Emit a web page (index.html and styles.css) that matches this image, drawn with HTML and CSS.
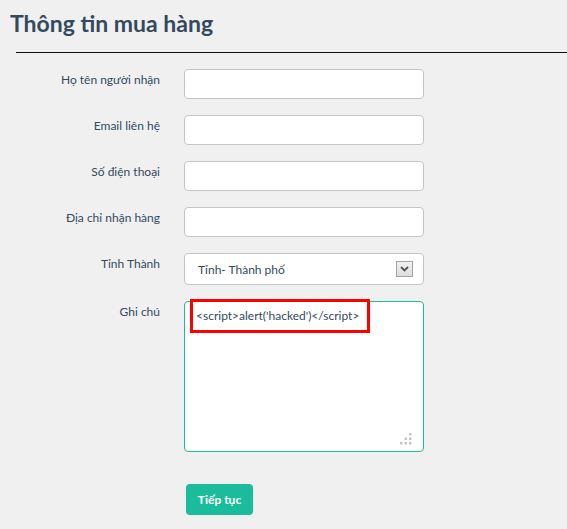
FILE: index.html
```html
<!DOCTYPE html>
<html lang="vi">
<head>
<meta charset="utf-8">
<title>Thông tin mua hàng</title>
<link rel="stylesheet" href="styles.css">
</head>
<body>
<div class="page">
  <h1 class="title">Thông tin mua hàng</h1>
  <hr class="rule">
  <form class="form">
    <div class="row">
      <label class="label">Họ tên người nhận</label>
      <input class="field" type="text">
    </div>
    <div class="row">
      <label class="label">Email liên hệ</label>
      <input class="field" type="text">
    </div>
    <div class="row">
      <label class="label">Số điện thoại</label>
      <input class="field" type="text">
    </div>
    <div class="row">
      <label class="label">Địa chỉ nhận hàng</label>
      <input class="field" type="text">
    </div>
    <div class="row">
      <label class="label">Tỉnh Thành</label>
      <div class="select-wrap">
        <select class="select"><option>Tỉnh- Thành phố</option></select>
        <span class="arrow">
          <svg width="9" height="6" viewBox="0 0 9 6"><path d="M1 1 L4.5 4.5 L8 1" fill="none" stroke="#555" stroke-width="1.8"/></svg>
        </span>
      </div>
    </div>
    <div class="row">
      <label class="label">Ghi chú</label>
      <div class="area-wrap">
        <textarea class="area">&lt;script&gt;alert('hacked')&lt;/script&gt;</textarea>
        <span class="highlight"></span>
        <svg class="grip" width="13" height="12" viewBox="0 0 13 12">
          <rect x="9" y="0" width="2.5" height="2.5" fill="#c4c4c4"/>
          <rect x="4.5" y="4.5" width="2.5" height="2.5" fill="#c4c4c4"/>
          <rect x="9" y="4.5" width="2.5" height="2.5" fill="#c4c4c4"/>
          <rect x="0" y="9" width="2.5" height="2.5" fill="#c4c4c4"/>
          <rect x="4.5" y="9" width="2.5" height="2.5" fill="#c4c4c4"/>
          <rect x="9" y="9" width="2.5" height="2.5" fill="#c4c4c4"/>
        </svg>
      </div>
    </div>
    <div class="actions">
      <button class="btn" type="button">Tiếp tục</button>
    </div>
  </form>
</div>
</body>
</html>
```
FILE: styles.css
```css
html, body {
  margin: 0;
  padding: 0;
  background: #f0f0f0;
}
body {
  font-family: Lato, "Open Sans", sans-serif;
  color: #34495e;
}
.page {
  width: 567px;
  height: 529px;
  overflow: hidden;
}
.title {
  margin: 9px 0 0 10px;
  font-size: 23px;
  line-height: 28px;
  font-weight: 700;
  color: #34495e;
}
.rule {
  margin: 15px 0 0 16px;
  border: 0;
  border-top: 1px solid #111;
  height: 0;
}
.form {
  display: flex;
  flex-direction: column;
  gap: 16px;
  padding-top: 16px;
}
.row {
  display: grid;
  grid-template-columns: 160px 240px;
  column-gap: 24px;
  align-items: start;
}
.label {
  text-align: right;
  font-size: 12px;
  line-height: 20px;
  padding-top: 1px;
  color: #34495e;
}
.field {
  box-sizing: border-box;
  width: 240px;
  height: 30px;
  margin: 0;
  border: 1px solid #c3c6c9;
  border-radius: 4px;
  background: #fff;
  font-family: inherit;
  font-size: 12px;
  padding: 0 12px;
  outline: none;
}
.select-wrap {
  position: relative;
  width: 240px;
  height: 32px;
}
.select {
  -webkit-appearance: none;
  appearance: none;
  box-sizing: border-box;
  width: 240px;
  height: 32px;
  margin: 0;
  border: 1px solid #c3c6c9;
  border-radius: 4px;
  background: #fff;
  font-family: inherit;
  font-size: 12px;
  color: #34495e;
  padding: 0 0 0 13px;
  outline: none;
}
.arrow {
  position: absolute;
  left: 212px;
  top: 8px;
  width: 15px;
  height: 14px;
  border: 1px solid #a3a3a3;
  background: linear-gradient(#f2f2f2, #dcdcdc);
  display: flex;
  align-items: center;
  justify-content: center;
}
.area-wrap {
  position: relative;
  width: 240px;
  height: 151px;
}
.area {
  box-sizing: border-box;
  width: 240px;
  height: 151px;
  margin: 0;
  border: 1px solid #1abc9c;
  border-radius: 4px;
  background: #fff;
  font-family: inherit;
  font-size: 12px;
  line-height: 20px;
  color: #34495e;
  padding: 4px 11px;
  resize: none;
  outline: none;
}
.highlight {
  position: absolute;
  left: 6px;
  top: -2px;
  width: 174px;
  height: 28px;
  border: 3px solid #f00;
  pointer-events: none;
}
.grip {
  position: absolute;
  left: 216px;
  top: 132px;
}
.actions {
  padding-left: 186px;
  padding-top: 16px;
}
.btn {
  width: 67px;
  height: 31px;
  border: 0;
  border-radius: 4px;
  background: #1abc9c;
  color: #fff;
  font-family: inherit;
  font-size: 12px;
  font-weight: 700;
  padding: 0;
}
```
